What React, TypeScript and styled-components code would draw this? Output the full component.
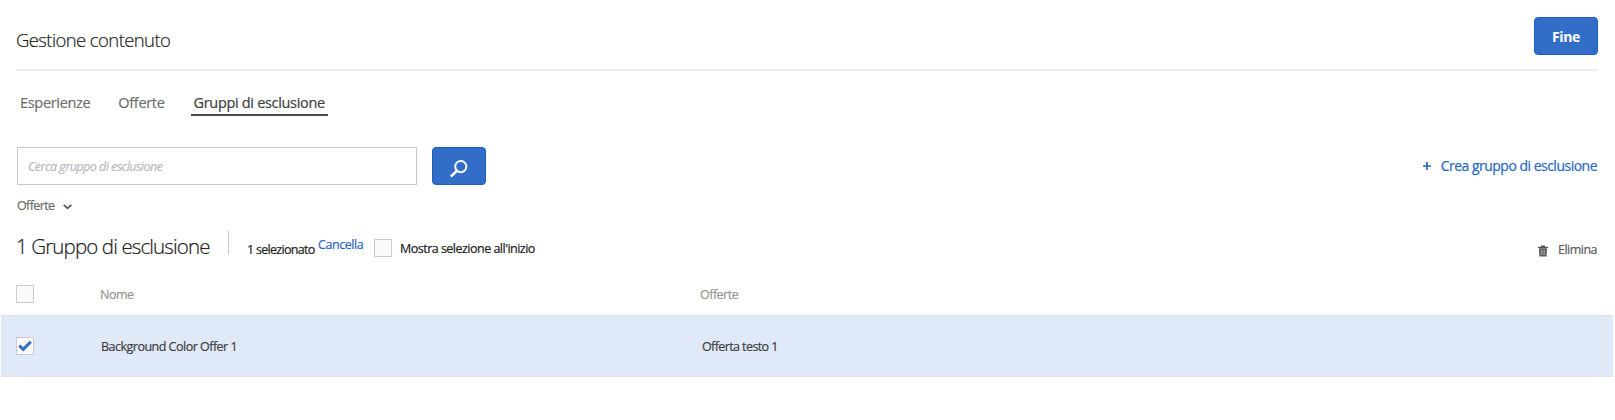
import React from 'react';
import styled, { createGlobalStyle } from 'styled-components';

const GlobalStyle = createGlobalStyle`
  * { box-sizing: border-box; }
  body {
    margin: 0;
    background: #fff;
    color: #4b4b4b;
    font-family: 'Open Sans', sans-serif;
    font-size: 12.5px;
    line-height: 18px;
    -webkit-text-stroke: 0.2px currentColor;
  }
  button, input { font-family: inherit; }
`;

const Page = styled.main`
  height: 420px;
  overflow: hidden;
`;

const Text = styled.span<{ $track?: number }>`
  letter-spacing: ${(p) => p.$track ?? -0.51}px;
  white-space: nowrap;
`;

const Header = styled.header`
  display: flex;
  justify-content: space-between;
  align-items: flex-start;
  height: 71px;
  margin: 0 17px 0 16px;
  padding-top: 17px;
  border-bottom: 2px solid #f0f0f0;
`;

const Title = styled.h1`
  margin: 11px 0 0;
  font-size: 18.5px;
  font-weight: 300;
  line-height: 24px;
  letter-spacing: -0.6px;
  color: #222;
`;

const PrimaryButton = styled.button<{ $width: number }>`
  display: flex;
  align-items: center;
  justify-content: center;
  width: ${(p) => p.$width}px;
  height: 38px;
  padding: 0;
  border: 1px solid #1f5fc1;
  border-radius: 4px;
  background: #326ec8;
  color: #fff;
  font-size: 14px;
  font-weight: 700;
  -webkit-text-stroke: 0;
`;

const Tabs = styled.nav`
  display: flex;
  height: 76px;
  padding: 22px 0 0 17px;
`;

const Tab = styled.a<{ $active?: boolean; $gap?: number }>`
  height: 23px;
  padding: 0 3px;
  margin-right: ${(p) => p.$gap ?? 0}px;
  border-bottom: 2px solid ${(p) => (p.$active ? '#4b4b4b' : 'transparent')};
  color: ${(p) => (p.$active ? '#404040' : '#6e6e6e')};
  font-size: 14.5px;
  line-height: 20px;
  letter-spacing: -0.32px;
`;

const SearchRow = styled.div`
  display: flex;
  align-items: center;
  height: 38px;
  padding: 0 17px;
`;

const SearchInput = styled.input`
  width: 400px;
  height: 38px;
  margin-right: 15px;
  padding: 0 10px;
  border: 1px solid #c8c8c8;
  outline: none;
  font-size: 12.5px;
  font-style: italic;
  letter-spacing: -0.53px;
  &::placeholder { color: #b9b9b9; opacity: 1; }
`;

const CreateLink = styled.a`
  display: flex;
  align-items: center;
  margin-left: auto;
  margin-right: 1px;
  gap: 10px;
  color: #2866c5;
  font-size: 14px;
`;

const Filter = styled.div`
  display: flex;
  align-items: center;
  gap: 8px;
  height: 18px;
  margin: 12px 0 0 17px;
  color: #6a6a6a;
`;

const Summary = styled.div`
  display: flex;
  align-items: flex-start;
  height: 58px;
  padding: 16px 17px 0 16px;
  color: #222;
`;

const Count = styled.h2`
  width: 212px;
  margin: 1px 0 0;
  font-size: 20.5px;
  font-weight: 300;
  line-height: 28px;
  letter-spacing: -0.87px;
  white-space: nowrap;
`;

const Separator = styled.i`
  width: 1px;
  height: 24px;
  margin-right: 18px;
  background: #c8c8c8;
`;

const Selected = styled.span`
  width: 71px;
  margin-top: 10px;
`;

const Clear = styled.a`
  width: 56px;
  margin-top: 5px;
  color: #2866c5;
`;

const CheckLabel = styled.label`
  display: flex;
  align-items: flex-start;
  gap: 8px;
  margin-top: 8px;
`;

const LabelText = styled(Text)`
  margin-top: 1px;
`;

const Box = styled.span`
  display: flex;
  width: 18px;
  height: 18px;
  border: 1px solid #cbcbcb;
  background: #fafafa;
`;

const Delete = styled.a`
  display: flex;
  align-items: center;
  gap: 10px;
  margin: 10px 1px 0 auto;
  color: #5c5c5c;
`;

const TableRow = styled.div<{ $head?: boolean }>`
  display: grid;
  grid-template-columns: ${(p) => (p.$head ? '84px 600px 1fr' : '85px 601px 1fr')};
  align-items: center;
  height: ${(p) => (p.$head ? 42 : 62)}px;
  margin: ${(p) => (p.$head ? '0' : '0 2px 0 1px')};
  padding-left: ${(p) => (p.$head ? 16 : 15)}px;
  border: solid #e1e3e6;
  border-width: ${(p) => (p.$head ? '0' : '1px 0')};
  background: ${(p) => (p.$head ? '#fff' : '#dfe9f7')};
  color: ${(p) => (p.$head ? '#959595' : '#3f3f3f')};
`;

const Cell = styled(Text)`
  padding-top: 2px;
`;

const SearchIcon = () => (
  <svg width="20" height="24" viewBox="0 0 20 24" fill="none" stroke="#fff">
    <circle cx="11.8" cy="12.6" r="5.6" strokeWidth="2" />
    <path d="M8 16.7 1.8 22.6" strokeWidth="2.6" />
  </svg>
);

const PlusIcon = () => (
  <svg width="8" height="8" viewBox="0 0 8 8" stroke="#2866c5" strokeWidth="1.7">
    <path d="M0 4h8M4 0v8" />
  </svg>
);

const ChevronIcon = () => (
  <svg width="9" height="8" viewBox="0 0 9 8" fill="none" stroke="#555" strokeWidth="1.7">
    <path d="M.7 2.8 4.5 6.4 8.3 2.8" />
  </svg>
);

const TrashIcon = () => (
  <svg width="10" height="14" viewBox="0 0 10 14" fill="#555">
    <path d="M0 3.7h3V2.5h4v1.2h3v1.4H0zM1 5.2h8l-.4 8.3H1.4z" />
    <path d="M3.3 6.5v5.8M5 6.5v5.8M6.7 6.5v5.8" stroke="#c4c0ba" strokeWidth=".7" />
  </svg>
);

const CheckIcon = () => (
  <svg width="16" height="16" viewBox="0 0 16 16" fill="none" stroke="#326ec8" strokeWidth="3">
    <path d="M2.3 7.5 6.2 11.4 13.8 3.8" />
  </svg>
);

export default function App() {
  return (
    <Page>
      <GlobalStyle />
      <Header>
        <Title>Gestione contenuto</Title>
        <PrimaryButton $width={64}>
          <Text $track={-0.4}>Fine</Text>
        </PrimaryButton>
      </Header>
      <Tabs>
        <Tab $gap={22}>Esperienze</Tab>
        <Tab $gap={23}>Offerte</Tab>
        <Tab $active>Gruppi di esclusione</Tab>
      </Tabs>
      <SearchRow>
        <SearchInput placeholder="Cerca gruppo di esclusione" />
        <PrimaryButton $width={54} aria-label="Cerca">
          <SearchIcon />
        </PrimaryButton>
        <CreateLink>
          <PlusIcon />
          <Text>Crea gruppo di esclusione</Text>
        </CreateLink>
      </SearchRow>
      <Filter>
        <Text $track={-0.6}>Offerte</Text>
        <ChevronIcon />
      </Filter>
      <Summary>
        <Count>1 Gruppo di esclusione</Count>
        <Separator />
        <Selected>
          <Text $track={-0.7}>1 selezionato</Text>
        </Selected>
        <Clear>
          <Text $track={-0.45}>Cancella</Text>
        </Clear>
        <CheckLabel>
          <Box />
          <LabelText>Mostra selezione all'inizio</LabelText>
        </CheckLabel>
        <Delete>
          <TrashIcon />
          <Text>Elimina</Text>
        </Delete>
      </Summary>
      <TableRow $head>
        <Box />
        <Cell>Nome</Cell>
        <Cell>Offerte</Cell>
      </TableRow>
      <TableRow>
        <Box>
          <CheckIcon />
        </Box>
        <Cell>Background Color Offer 1</Cell>
        <Cell $track={-0.6}>Offerta testo 1</Cell>
      </TableRow>
    </Page>
  );
}
